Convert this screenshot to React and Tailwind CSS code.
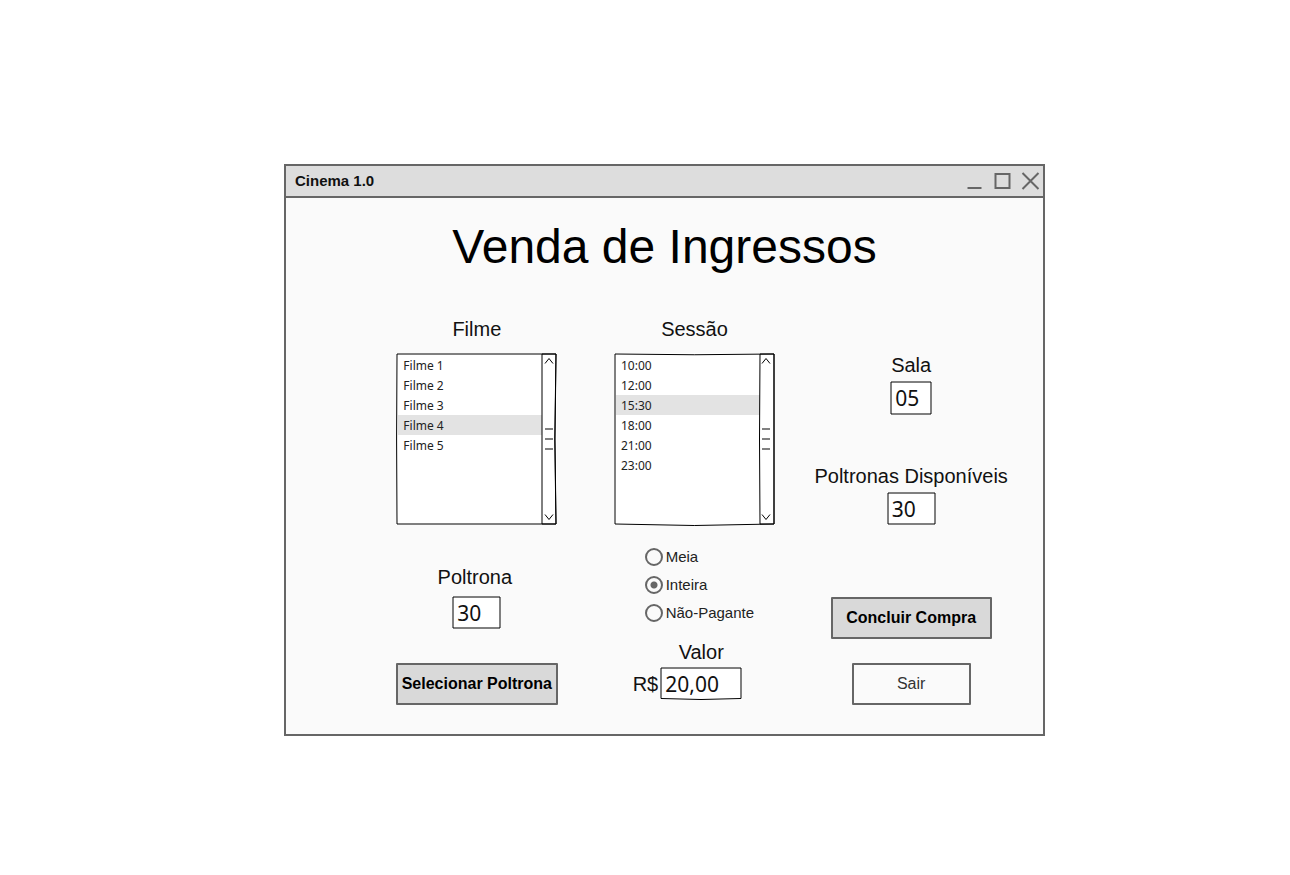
import React from "react";

function Outline({ viewBox, children }) {
  return (
    <svg
      aria-hidden="true"
      className="pointer-events-none absolute inset-0 size-full overflow-visible"
      viewBox={viewBox}
      preserveAspectRatio="none"
      fill="none"
      stroke="#000"
      strokeWidth="1"
      strokeLinejoin="round"
    >
      {children}
    </svg>
  );
}

function ScrollBar() {
  return (
    <div className="flex w-[15px] flex-col items-center justify-between py-1 pr-0.5">
      <button type="button" aria-label="Rolar para cima" className="flex h-2 w-3 items-center justify-center">
        <svg width="12" height="8" viewBox="0 0 12 8" fill="none" stroke="#000">
          <path d="M2 6.5 L6 1.5 L10 6.5" />
        </svg>
      </button>
      <div className="flex flex-col gap-2">
        <span className="h-0.5 w-2 bg-[#808080]" />
        <span className="h-0.5 w-2 bg-[#808080]" />
        <span className="h-0.5 w-2 bg-[#808080]" />
      </div>
      <button type="button" aria-label="Rolar para baixo" className="flex h-2 w-3 items-center justify-center">
        <svg width="12" height="8" viewBox="0 0 12 8" fill="none" stroke="#000">
          <path d="M2 1.5 L6 6.5 L10 1.5" />
        </svg>
      </button>
    </div>
  );
}

function ListBox({ id, label, items, selected, children }) {
  return (
    <div className="flex flex-col items-center gap-3">
      <label htmlFor={id} className="text-xl leading-6 text-[#111]">{label}</label>
      <div className="relative flex h-[172px] w-[161px] bg-white">
        <select
          id={id}
          size={8}
          defaultValue={selected}
          className="min-w-0 flex-1 appearance-none overflow-hidden border-0 bg-transparent bg-none py-0.5 pl-0.5 font-['Noto_Sans',sans-serif] text-xs text-[#222] outline-none [scrollbar-width:none]"
        >
          {items.map((item) => (
            <option
              key={item}
              value={item}
              className="h-5 min-h-5 px-[5px] pt-0.5 pb-0 text-[#222] checked:bg-[#e3e3e3] checked:bg-[linear-gradient(#e3e3e3,#e3e3e3)]"
            >
              {item}
            </option>
          ))}
        </select>
        <ScrollBar />
        <Outline viewBox="0 0 161 172">{children}</Outline>
      </div>
    </div>
  );
}

function Field({ id, value, size, path }) {
  return (
    <div className={`relative bg-white ${size}`}>
      <input
        id={id}
        defaultValue={value}
        className="block size-full border-0 bg-transparent pl-[5px] font-['Noto_Sans',sans-serif] text-[21px] leading-8 text-[#111] outline-none"
      />
      <Outline viewBox={path.box}>
        <path d={path.d} />
      </Outline>
    </div>
  );
}

const SMALL = { box: "0 0 49 33", d: "M1 1 L48 1 L48 32 L1 32 Z" };
const ROOM = { box: "0 0 42 34", d: "M1 1 L41 1 L41 33 L1 33 Z" };
const PRICE = { box: "0 0 82 33", d: "M1 1 L81 1 L81 31.5 Q41 33.5 1 31.5 Z" };

function Radio({ label, checked }) {
  return (
    <label className="flex items-center gap-[3px] text-[15px] leading-[18px] text-[#222]">
      <input
        type="radio"
        name="tipo"
        defaultChecked={checked}
        className="m-0 size-[18px] appearance-none rounded-full border-2 border-[#666] bg-[#fafafa] checked:bg-[radial-gradient(circle,#666_3px,transparent_4px)]"
      />
      {label}
    </label>
  );
}

export default function App() {
  return (
    <main className="flex min-h-screen items-center justify-center bg-white pt-[25px] pl-[39px] font-['Liberation_Sans',Arial,sans-serif] text-black">
      <section className="w-full max-w-[761px] border-2 border-[#666] bg-[#fafafa]">
        <header className="flex h-8 items-center justify-between border-b-2 border-[#666] bg-[#ddd] pr-[3px] pl-[9px]">
          <span className="text-[15px] leading-6 font-bold text-[#111]">Cinema 1.0</span>
          <div className="flex gap-2">
            <button type="button" aria-label="Minimizar">
              <svg width="20" height="20" fill="none" stroke="#666" strokeWidth="2">
                <path d="M3.500 17 H17.500" />
              </svg>
            </button>
            <button type="button" aria-label="Maximizar">
              <svg width="20" height="20" fill="none" stroke="#666" strokeWidth="2">
                <path d="M3.500 3 H17.500 V17 H3.500 Z" />
              </svg>
            </button>
            <button type="button" aria-label="Fechar">
              <svg width="20" height="20" fill="none" stroke="#666" strokeWidth="2">
                <path d="M2.500 2 L18.500 18 M18.500 2 L2.500 18" />
              </svg>
            </button>
          </div>
        </header>

        <h1 className="pt-[21px] text-center text-5xl leading-[56px]">Venda de Ingressos</h1>

        <form className="grid grid-cols-3 pt-[42px] pr-[22px] pb-[29px] pl-[82px]" onSubmit={(e) => e.preventDefault()}>
          <div className="flex flex-col items-center">
            <ListBox
              id="filme"
              label="Filme"
              items={["Filme 1", "Filme 2", "Filme 3", "Filme 4", "Filme 5"]}
              selected="Filme 4"
            >
              <path d="M1 1 L160 1 Q157.500 86 160 171 L1 171 Q0.200 86 1 1 Z" />
              <path d="M146 1 V171 H160 Q158 86 160 1 Z" />
            </ListBox>
            <label htmlFor="poltrona" className="mt-10 pr-1 text-xl leading-6 text-[#111]">Poltrona</label>
            <div className="mt-[7px]">
              <Field id="poltrona" value="30" size="h-[33px] w-[49px]" path={SMALL} />
            </div>
            <button type="button" className="mt-[34px] h-[42px] w-[162px] rounded-[1px] border-2 border-[#666] bg-[#d9d9d9] text-base font-bold whitespace-nowrap">
              Selecionar Poltrona
            </button>
          </div>

          <div className="flex flex-col">
            <ListBox
              id="sessao"
              label="Sessão"
              items={["10:00", "12:00", "15:30", "18:00", "21:00", "23:00"]}
              selected="15:30"
            >
              <path d="M1 1 Q80 2.500 160 1 L160 171 Q80 174 1 171 Z" />
              <path d="M146 1 Q145 86 146 171 H160 V1 Z" />
            </ListBox>
            <div role="radiogroup" aria-label="Tipo de ingresso" className="mt-[23px] flex flex-col gap-2.5 pl-[59px]">
              <Radio label="Meia" />
              <Radio label="Inteira" checked />
              <Radio label="Não-Pagante" />
            </div>
            <div className="mt-[18px] grid grid-cols-[auto_auto] justify-start gap-x-0.5 gap-y-[3px] pl-[47px] text-xl leading-6 text-[#111]">
              <label htmlFor="valor" className="col-start-2 text-center">Valor</label>
              <span className="self-center">R$</span>
              <Field id="valor" value="20,00" size="h-[33px] w-[82px]" path={PRICE} />
            </div>
          </div>

          <div className="flex flex-col items-center pt-9 pr-0.5">
            <label htmlFor="sala" className="text-xl leading-6 text-[#111]">Sala</label>
            <div className="mt-1">
              <Field id="sala" value="05" size="h-[34px] w-[42px]" path={ROOM} />
            </div>
            <label htmlFor="disponiveis" className="mt-[49px] text-xl leading-6 whitespace-nowrap text-[#111]">
              Poltronas Disponíveis
            </label>
            <div className="mt-1">
              <Field id="disponiveis" value="30" size="h-[33px] w-[49px]" path={SMALL} />
            </div>
            <button type="submit" className="mt-[72px] h-[42px] w-[161px] rounded-[1px] border-2 border-[#666] bg-[#d9d9d9] text-base font-bold whitespace-nowrap">
              Concluir Compra
            </button>
            <button type="button" className="mt-6 h-[42px] w-[119px] rounded-[1px] border-2 border-[#666] text-base text-[#333]">
              Sair
            </button>
          </div>
        </form>
      </section>
    </main>
  );
}
